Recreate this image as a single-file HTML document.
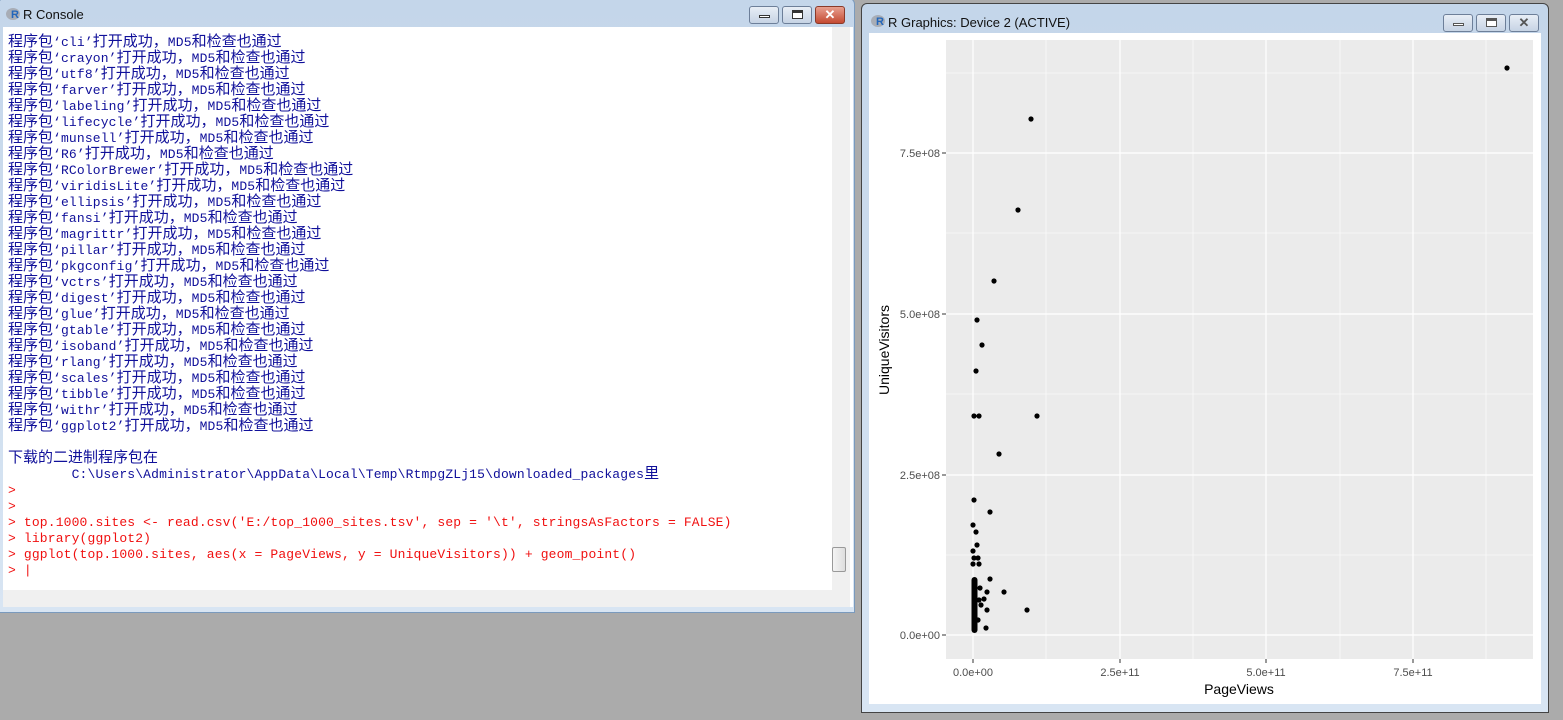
<!DOCTYPE html>
<html><head><meta charset="utf-8"><style>
*{margin:0;padding:0;box-sizing:border-box}
body{width:1563px;height:720px;background:#ababab;position:relative;overflow:hidden;font-family:"Liberation Sans",sans-serif}
.win{position:absolute;background:linear-gradient(#c4d6ea,#d8e5f3);border:1px solid #555;border-radius:6px 6px 0 0}
.title{position:absolute;font-size:13px;color:#111}
.btn{position:absolute;height:18px;border:1px solid #6d7f99;border-radius:3px;background:linear-gradient(#e8eef6,#c6d3e4)}
.btn.x{background:linear-gradient(#e8a090,#c44a32);border-color:#8a3a2a}
.con{position:absolute;left:3px;top:27px;width:850px;height:580px;background:#fff}
.txt{position:absolute;left:8px;top:35px;font-family:"Liberation Mono","Noto Sans CJK SC",monospace;font-size:13px;letter-spacing:0.15px;color:#10109a;white-space:normal}
.txt div{height:16px;line-height:16px;overflow:visible;white-space:pre}
.txt i{font-style:normal;font-family:"Noto Sans CJK SC",sans-serif;font-size:15px;letter-spacing:0;line-height:1px}
.r{color:#f01010}
.rlogo{position:absolute;width:14px;height:12px;border-radius:50%;background:#a8adb6}
.rlogo b{position:absolute;left:5px;top:1px;font:bold 11px "Liberation Sans";color:#2266bb}
</style></head><body>
<div class="win" style="left:-2px;top:-2px;width:857px;height:615px;border-color:#7a9abd">
 <div class="rlogo" style="left:7px;top:9px"><b>R</b></div>
 <div class="title" style="left:24px;top:8px">R Console</div>
 <div class="btn" style="left:750px;top:7px;width:30px"><div style="position:absolute;left:9px;top:8px;width:11px;height:3px;border:1px solid #333;background:#fff"></div></div>
 <div class="btn" style="left:783px;top:7px;width:30px"><div style="position:absolute;left:9px;top:3px;width:11px;height:9px;border:1px solid #333;border-top-width:3px;background:#fff"></div></div>
 <div class="btn x" style="left:816px;top:7px;width:30px;color:#fff;font:bold 13px 'Liberation Sans';text-align:center;line-height:16px">✕</div>
</div>
<div class="con"></div>
<div style="position:absolute;left:832px;top:27px;width:18px;height:563px;background:#f0f0f0"></div>
<div style="position:absolute;left:832px;top:547px;width:14px;height:25px;border:1px solid #999;border-radius:2px;background:linear-gradient(90deg,#f4f4f4,#ddd)"></div>
<div style="position:absolute;left:3px;top:590px;width:847px;height:17px;background:#f0f0f0"></div>
<div class="txt"><div><i>程序包</i>‘cli’<i>打开成功，</i>MD5<i>和检查也通过</i></div><div><i>程序包</i>‘crayon’<i>打开成功，</i>MD5<i>和检查也通过</i></div><div><i>程序包</i>‘utf8’<i>打开成功，</i>MD5<i>和检查也通过</i></div><div><i>程序包</i>‘farver’<i>打开成功，</i>MD5<i>和检查也通过</i></div><div><i>程序包</i>‘labeling’<i>打开成功，</i>MD5<i>和检查也通过</i></div><div><i>程序包</i>‘lifecycle’<i>打开成功，</i>MD5<i>和检查也通过</i></div><div><i>程序包</i>‘munsell’<i>打开成功，</i>MD5<i>和检查也通过</i></div><div><i>程序包</i>‘R6’<i>打开成功，</i>MD5<i>和检查也通过</i></div><div><i>程序包</i>‘RColorBrewer’<i>打开成功，</i>MD5<i>和检查也通过</i></div><div><i>程序包</i>‘viridisLite’<i>打开成功，</i>MD5<i>和检查也通过</i></div><div><i>程序包</i>‘ellipsis’<i>打开成功，</i>MD5<i>和检查也通过</i></div><div><i>程序包</i>‘fansi’<i>打开成功，</i>MD5<i>和检查也通过</i></div><div><i>程序包</i>‘magrittr’<i>打开成功，</i>MD5<i>和检查也通过</i></div><div><i>程序包</i>‘pillar’<i>打开成功，</i>MD5<i>和检查也通过</i></div><div><i>程序包</i>‘pkgconfig’<i>打开成功，</i>MD5<i>和检查也通过</i></div><div><i>程序包</i>‘vctrs’<i>打开成功，</i>MD5<i>和检查也通过</i></div><div><i>程序包</i>‘digest’<i>打开成功，</i>MD5<i>和检查也通过</i></div><div><i>程序包</i>‘glue’<i>打开成功，</i>MD5<i>和检查也通过</i></div><div><i>程序包</i>‘gtable’<i>打开成功，</i>MD5<i>和检查也通过</i></div><div><i>程序包</i>‘isoband’<i>打开成功，</i>MD5<i>和检查也通过</i></div><div><i>程序包</i>‘rlang’<i>打开成功，</i>MD5<i>和检查也通过</i></div><div><i>程序包</i>‘scales’<i>打开成功，</i>MD5<i>和检查也通过</i></div><div><i>程序包</i>‘tibble’<i>打开成功，</i>MD5<i>和检查也通过</i></div><div><i>程序包</i>‘withr’<i>打开成功，</i>MD5<i>和检查也通过</i></div><div><i>程序包</i>‘ggplot2’<i>打开成功，</i>MD5<i>和检查也通过</i></div><div></div><div><i>下载的二进制程序包在</i></div><div>        C:\Users\Administrator\AppData\Local\Temp\RtmpgZLj15\downloaded_packages<i>里</i></div><div class="r">&gt;</div><div class="r">&gt;</div><div class="r">&gt; top.1000.sites &lt;- read.csv('E:/top_1000_sites.tsv', sep = '\t', stringsAsFactors = FALSE)</div><div class="r">&gt; library(ggplot2)</div><div class="r">&gt; ggplot(top.1000.sites, aes(x = PageViews, y = UniqueVisitors)) + geom_point()</div><div class="r">&gt; |</div></div>

<div class="win" style="left:861px;top:3px;width:688px;height:710px;border-color:#444">
 <div class="rlogo" style="left:9px;top:11px"><b>R</b></div>
 <div class="title" style="left:26px;top:11px">R Graphics: Device 2 (ACTIVE)</div>
 <div class="btn" style="left:581px;top:10px;width:30px"><div style="position:absolute;left:9px;top:8px;width:11px;height:3px;border:1px solid #555;background:#fff"></div></div>
 <div class="btn" style="left:614px;top:10px;width:30px"><div style="position:absolute;left:9px;top:3px;width:11px;height:9px;border:1px solid #555;border-top-width:3px;background:#fff"></div></div>
 <div class="btn" style="left:647px;top:10px;width:30px;color:#555;font:bold 13px 'Liberation Sans';text-align:center;line-height:16px">✕</div>
</div>
<svg style="position:absolute;left:869px;top:33px" width="672" height="671" viewBox="869 33 672 671">
<rect x="869" y="33" width="672" height="671" fill="#fff"/>
<rect x="946" y="40" width="587" height="619" fill="#ebebeb"/>
<g stroke="#fff" stroke-width="0.6">
<line x1="946" x2="1533" y1="555" y2="555"/><line x1="946" x2="1533" y1="394" y2="394"/><line x1="946" x2="1533" y1="233" y2="233"/><line x1="946" x2="1533" y1="73" y2="73"/>
<line y1="40" y2="659" x1="1046" x2="1046"/><line y1="40" y2="659" x1="1193" x2="1193"/><line y1="40" y2="659" x1="1340" x2="1340"/><line y1="40" y2="659" x1="1486" x2="1486"/>
</g>
<g stroke="#fff" stroke-width="1.2">
<line x1="946" x2="1533" y1="635" y2="635"/><line x1="946" x2="1533" y1="475" y2="475"/><line x1="946" x2="1533" y1="314" y2="314"/><line x1="946" x2="1533" y1="153" y2="153"/>
<line y1="40" y2="659" x1="973" x2="973"/><line y1="40" y2="659" x1="1120" x2="1120"/><line y1="40" y2="659" x1="1266" x2="1266"/><line y1="40" y2="659" x1="1413" x2="1413"/>
</g>
<g stroke="#333" stroke-width="1">
<line x1="942" x2="946" y1="635" y2="635"/><line x1="942" x2="946" y1="475" y2="475"/><line x1="942" x2="946" y1="314" y2="314"/><line x1="942" x2="946" y1="153" y2="153"/>
<line y1="659" y2="663" x1="973" x2="973"/><line y1="659" y2="663" x1="1120" x2="1120"/><line y1="659" y2="663" x1="1266" x2="1266"/><line y1="659" y2="663" x1="1413" x2="1413"/>
</g>
<g font-family="Liberation Sans" font-size="11" fill="#4d4d4d" text-anchor="end">
<text x="940" y="639">0.0e+00</text><text x="940" y="479">2.5e+08</text><text x="940" y="318">5.0e+08</text><text x="940" y="157">7.5e+08</text>
</g>
<g font-family="Liberation Sans" font-size="11" fill="#4d4d4d" text-anchor="middle">
<text x="973" y="676">0.0e+00</text><text x="1120" y="676">2.5e+11</text><text x="1266" y="676">5.0e+11</text><text x="1413" y="676">7.5e+11</text>
</g>
<text x="1239" y="694" font-family="Liberation Sans" font-size="14" text-anchor="middle" fill="#000">PageViews</text>
<text transform="translate(889,350) rotate(-90)" font-family="Liberation Sans" font-size="14" text-anchor="middle" fill="#000">UniqueVisitors</text>
<rect x="971.5" y="577" width="6" height="56" rx="3" fill="#000"/>
<g fill="#000">
<circle cx="1507" cy="68" r="2.6"/><circle cx="1031" cy="119" r="2.6"/><circle cx="1018" cy="210" r="2.6"/><circle cx="994" cy="281" r="2.6"/><circle cx="977" cy="320" r="2.6"/><circle cx="982" cy="345" r="2.6"/><circle cx="976" cy="371" r="2.6"/>
<circle cx="974" cy="416" r="2.6"/><circle cx="979" cy="416" r="2.6"/><circle cx="1037" cy="416" r="2.6"/><circle cx="999" cy="454" r="2.6"/><circle cx="974" cy="500" r="2.6"/><circle cx="990" cy="512" r="2.6"/><circle cx="973" cy="525" r="2.6"/><circle cx="976" cy="532" r="2.6"/><circle cx="977" cy="545" r="2.6"/><circle cx="973" cy="551" r="2.6"/><circle cx="974" cy="558" r="2.6"/><circle cx="978" cy="558" r="2.6"/><circle cx="973" cy="564" r="2.6"/><circle cx="979" cy="564" r="2.6"/><circle cx="990" cy="579" r="2.6"/><circle cx="1004" cy="592" r="2.6"/><circle cx="987" cy="592" r="2.6"/><circle cx="984" cy="599" r="2.6"/><circle cx="981" cy="605" r="2.6"/><circle cx="987" cy="610" r="2.6"/><circle cx="1027" cy="610" r="2.6"/><circle cx="986" cy="628" r="2.6"/><circle cx="980" cy="588" r="2.6"/><circle cx="978" cy="620" r="2.6"/><circle cx="979" cy="600" r="2.6"/>
</g>
</svg>
</body></html>
